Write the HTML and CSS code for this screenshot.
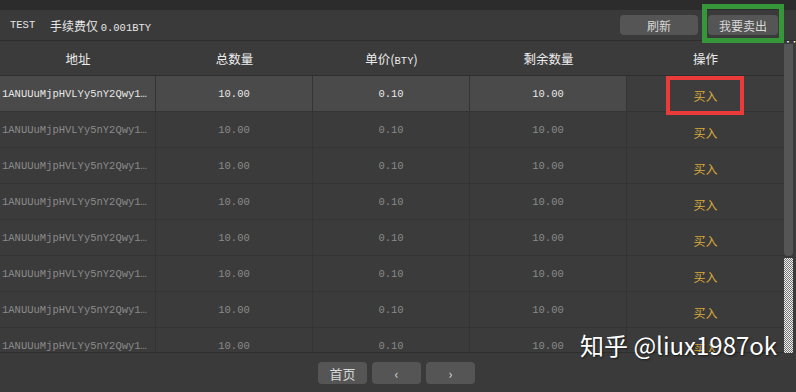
FILE: index.html
```html
<!DOCTYPE html>
<html lang="zh-CN">
<head>
    <meta charset="UTF-8">
    <meta name="viewport" content="width=device-width, initial-scale=1.0">
    <title>TEST 挂单</title>
    <link rel="stylesheet" href="styles.css">
</head>
<body>
    <div class="top-strip"></div>
    <header class="toolbar">
        <span class="coin">TEST</span>
        <span class="fee">手续费仅 <em>0.001BTY</em></span>
        <div class="tools">
            <button class="btn btn-refresh">刷新</button>
            <button class="btn btn-sell">我要卖出</button>
        </div>
    </header>
    <section class="main">
        <div class="table">
            <div class="row head">
                <div class="cell">地址</div>
                <div class="cell">总数量</div>
                <div class="cell"><span>单价(<em>BTY</em>)</span></div>
                <div class="cell">剩余数量</div>
                <div class="cell">操作</div>
            </div>
            <div id="rows"></div>
        </div>
        <div class="scrollbar">
            <span class="dots">···</span>
            <div class="track"></div>
            <div class="thumb"></div>
        </div>
    </section>
    <footer class="pager">
        <button class="pbtn">首页</button>
        <button class="pbtn">&lsaquo;</button>
        <button class="pbtn">&rsaquo;</button>
    </footer>

    <div class="mark mark-red"></div>
    <div class="mark mark-green"></div>
    <div class="watermark">知乎 @liux1987ok</div>

    <script>
        let rows = document.getElementById('rows')
        for (let i = 0; i < 8; i++) {
            let r = document.createElement('div')
            r.className = i == 0 ? 'row body active' : 'row body'
            r.innerHTML = `<div class="cell addr">1ANUUuMjpHVLYy5nY2Qwy1…</div>
                <div class="cell num">10.00</div>
                <div class="cell num">0.10</div>
                <div class="cell num">10.00</div>
                <div class="cell op"><a href="#">买入</a></div>`
            rows.appendChild(r)
        }
    </script>
</body>
</html>
```

FILE: styles.css
```css
* {
    box-sizing: border-box;
}
body {
    margin: 0;
    width: 796px;
    height: 392px;
    overflow: hidden;
    background: #3a3a3a;
    color: #e6e6e6;
    font-family: "Noto Sans CJK SC", "Liberation Sans", sans-serif;
    font-size: 12px;
    position: relative;
}
.top-strip {
    height: 10px;
    background: #2c2c2c;
}
.toolbar {
    height: 31px;
    display: flex;
    align-items: center;
    padding-left: 10px;
    background: #3a3a3a;
    border-bottom: 1px solid #2e2e2e;
}
.coin {
    font-family: "Liberation Mono", monospace;
    font-size: 10.5px;
    width: 40px;
}
.fee em {
    font-style: normal;
    font-family: "Liberation Mono", monospace;
    font-size: 10.5px;
}
.tools {
    margin-left: auto;
    display: flex;
    gap: 10px;
    padding-right: 18px;
}
.btn {
    height: 20px;
    border: 0;
    border-radius: 4px;
    background: #555;
    color: #d8d8d8;
    font-family: inherit;
    font-size: 12px;
    padding: 0;
}
.btn-refresh {
    width: 78px;
}
.btn-sell {
    width: 70px;
}

.main {
    display: flex;
    height: 312px;
}
.table {
    width: 784px;
    overflow: hidden;
    border-bottom: 1px solid #2e2e2e;
}
.row {
    display: grid;
    grid-template-columns: 156px 157px 157px 157px 157px;
}
.head {
    height: 35px;
    background: #3b3b3b;
    border-bottom: 1px solid #2e2e2e;
}
.head .cell {
    display: flex;
    align-items: center;
    justify-content: center;
    font-size: 12.5px;
    color: #ececec;
}
.head em {
    font-style: normal;
    font-family: "Liberation Mono", monospace;
    font-size: 10.5px;
}
.body {
    height: 36px;
    background: #3b3b3b;
}
.body .cell {
    display: flex;
    align-items: center;
    justify-content: center;
    border-right: 1px solid #343434;
    border-bottom: 1px solid #343434;
    color: #8a8a8a;
    font-family: "Liberation Mono", monospace;
    font-size: 10.5px;
}
.body .addr {
    justify-content: flex-start;
    padding-left: 2px;
    white-space: nowrap;
    overflow: hidden;
}
.active .cell {
    background: #4a4a4a;
    color: #e8e8e8;
}
.active .op {
    background: #3d3d3d;
}
.op {
    border-right: 0 !important;
}
.op a {
    color: #d9aa3a;
    text-decoration: none;
    font-family: "Noto Sans CJK SC", sans-serif;
    font-size: 12px;
    margin-top: 6px;
}
.active .op a {
    margin-top: 3px;
}

.scrollbar {
    width: 12px;
    position: relative;
    background: #3a3a3a;
}
.dots {
    position: absolute;
    top: -3px;
    left: 0;
    font-size: 8px;
    line-height: 8px;
    color: #fff;
    letter-spacing: -1.5px;
}
.track {
    position: absolute;
    left: 0;
    top: 3px;
    width: 9px;
    height: 212px;
    background: #555;
    border-radius: 0 0 4px 4px;
}
.thumb {
    position: absolute;
    left: 0;
    top: 217px;
    width: 9px;
    height: 95px;
    background: repeating-conic-gradient(#eee 0 25%, #777 0 50%) 0 0 / 2px 2px;
}

.pager {
    display: flex;
    gap: 5px;
    padding-top: 9px;
    padding-left: 318px;
}
.pbtn {
    width: 49px;
    height: 22px;
    border: 0;
    border-radius: 4px;
    background: #555;
    color: #d8d8d8;
    font-family: inherit;
    font-size: 13px;
    padding: 0;
}

.mark {
    position: absolute;
    border-style: solid;
}
.mark-red {
    left: 666px;
    top: 76px;
    width: 78px;
    height: 39px;
    border-width: 4px;
    border-color: #ea3a3a;
}
.mark-green {
    left: 702px;
    top: 4px;
    width: 82px;
    height: 39px;
    border-width: 5px;
    border-color: #35963a;
}
.watermark {
    position: absolute;
    left: 580px;
    top: 327px;
    font-size: 24px;
    color: #fff;
    text-shadow: 1px 1px 2px rgba(0, 0, 0, 0.6);
    font-family: "Noto Sans CJK SC", "Noto Sans", sans-serif;
}
```
